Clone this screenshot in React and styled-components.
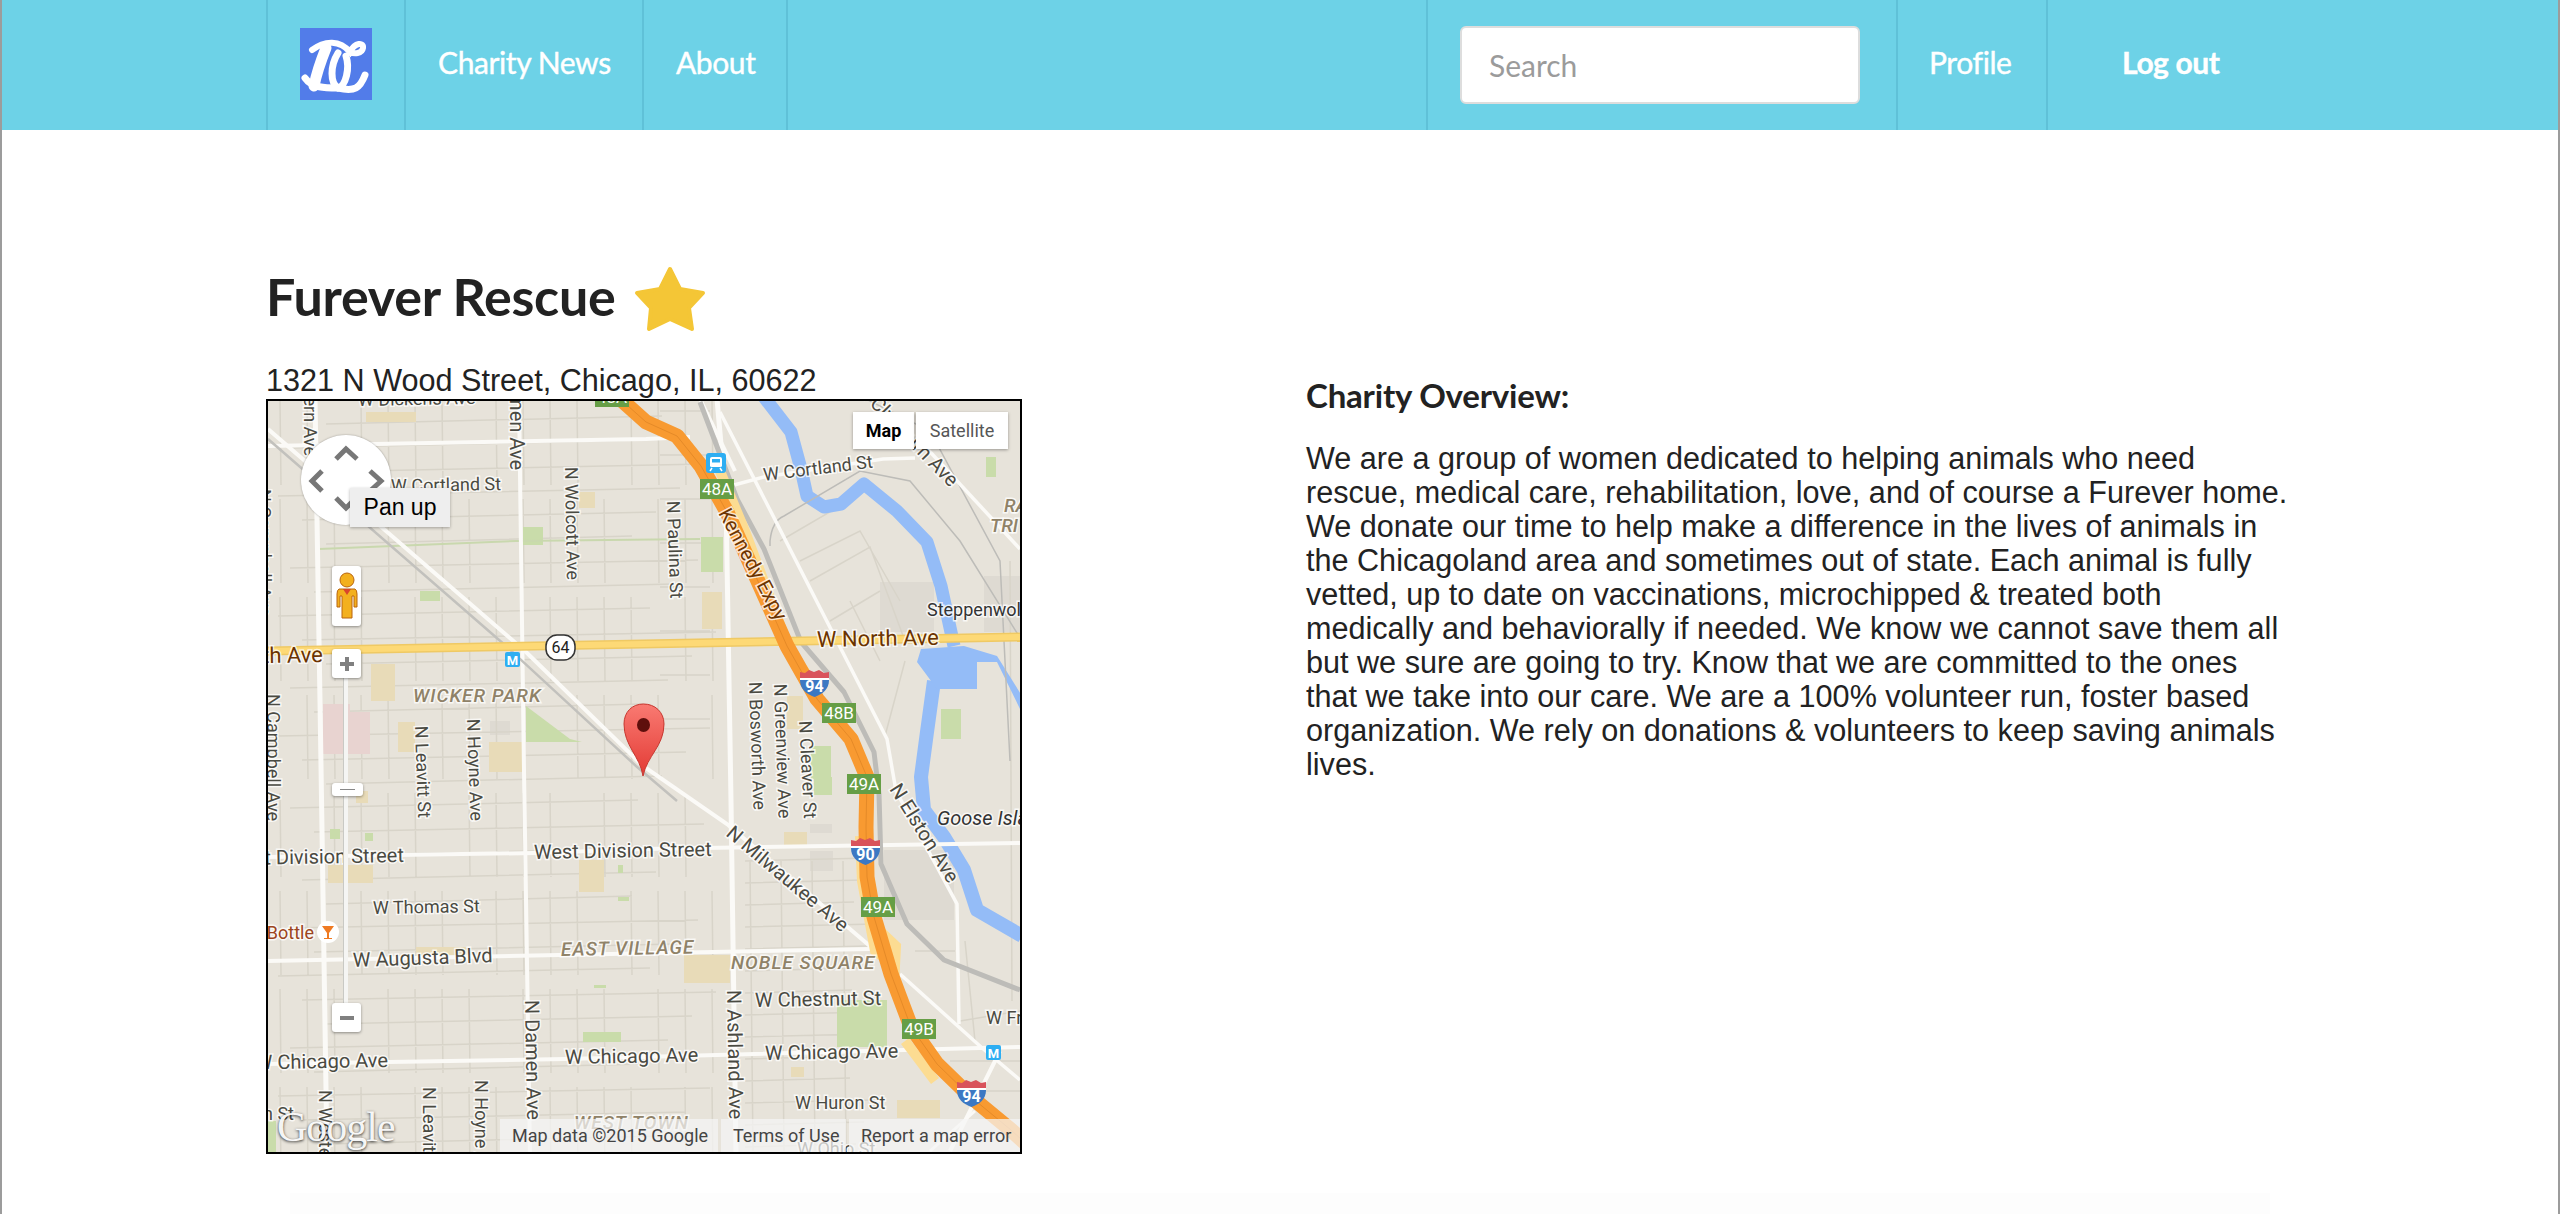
import React from 'react';
import styled, { createGlobalStyle } from 'styled-components';

const GlobalStyle = createGlobalStyle`
  html, body { margin: 0; padding: 0; background: #fff; }
  * { box-sizing: border-box; }
`;

// page shell, with the thin grey window edge of the screenshot
const Page = styled.div`
  position: relative;
  min-height: 1214px;
  height: 1214px;
  overflow: hidden;
  display: flex;
  flex-direction: column;
  border-left: 2px solid #9c9c9c;
  border-right: 2px solid #9c9c9c;
  color: #222;
  font-family: "Liberation Sans", Arial, sans-serif;

  &::before {
    content: '';
    position: absolute;
    left: -2px;
    top: 313px;
    width: 2px;
    height: 40px;
    background: #666;
  }
`;

// top bar
const NavBar = styled.nav`
  flex: none;
  height: 130px;
  background: #6dd2e7;
  display: flex;
  padding-left: 264px;
  font-family: Lato, sans-serif;
`;

const NavCell = styled.div`
  height: 100%;
  width: ${p => p.$w}px;
  border-left: 2px solid #5fc1d8;
  display: flex;
  align-items: center;
  justify-content: ${p => p.$center ? 'center' : 'flex-start'};
  padding-left: ${p => p.$pad || 0}px;
`;

const NavLink = styled.a`
  color: #fff;
  font-size: 30px;
  font-weight: ${p => p.$bold ? 700 : 400};
  letter-spacing: -0.4px;
  margin-top: -6px;
  -webkit-text-stroke: 0.4px #fff;
`;

const LogoSvg = styled.svg`
  display: block;
  width: 72px;
  height: 72px;
  margin-top: -2px;
`;

const SearchInput = styled.input`
  width: 400px;
  height: 78px;
  padding: 0 27px;
  border: 2px solid #ddd;
  border-radius: 6px;
  background: #fff;
  font-family: Lato, sans-serif;
  font-size: 30px;
  outline: none;
  &::placeholder { color: #9b9b9b; opacity: 1; }
`;

// content
const Main = styled.main`
  flex: none;
  height: 1063px;
  display: flex;
  padding: 130px 0 0 264px;
`;

const LeftColumn = styled.section`
  width: 1040px;
`;

const TitleRow = styled.div`
  display: flex;
  align-items: center;
  gap: 18px;
  height: 72px;
  margin-top: 3px;
`;

const Title = styled.h1`
  margin: -6px 0 0;
  font-family: Lato, sans-serif;
  font-size: 52px;
  font-weight: 700;
  letter-spacing: -0.2px;
  color: #222;
  line-height: 1;
`;

const StarIcon = styled.svg`
  display: block;
  width: 72px;
  height: 66px;
`;

const Address = styled.div`
  margin-top: 28px;
  font-size: 30.6px;
  line-height: 34px;
  height: 36px;
  white-space: nowrap;
  color: #222;
`;

const MapFrame = styled.div`
  position: relative;
  width: 756px;
  height: 755px;
  border: 2px solid #000;
  overflow: hidden;
  background: #e7e3da;
`;

const MapSvg = styled.svg`
  display: block;
  width: 752px;
  height: 751px;
`;

const MapLabel = styled.text`
  font-family: Roboto, sans-serif;
  font-size: ${p => p.$size || 18}px;
  font-style: ${p => p.$italic ? 'italic' : 'normal'};
  font-weight: ${p => p.$weight || 400};
  letter-spacing: ${p => p.$track || 0}px;
  fill: ${p => p.$fill || '#4a4a42'};
  stroke: rgba(255, 255, 255, 0.75);
  stroke-width: 3px;
  paint-order: stroke;
`;

const ShieldText = styled.text`
  font-family: Roboto, sans-serif;
  font-size: ${p => p.$size || 17}px;
  font-weight: ${p => p.$weight || 400};
  fill: ${p => p.$fill || '#fff'};
  text-anchor: middle;
`;

const PanControl = styled.div`
  position: absolute;
  left: 33px;
  top: 34px;
  width: 90px;
  height: 90px;
  border-radius: 50%;
  background: #fff;
  box-shadow: 0 0 2px rgba(0, 0, 0, 0.35);
`;

const Tooltip = styled.div`
  position: absolute;
  left: 82px;
  top: 87px;
  width: 100px;
  height: 39px;
  background: #eee;
  box-shadow: 0 1px 3px rgba(0, 0, 0, 0.3);
  font-size: 23px;
  line-height: 39px;
  text-align: center;
  color: #000;
`;

const ControlBox = styled.div`
  position: absolute;
  left: 64px;
  top: ${p => p.$top}px;
  width: 29px;
  height: ${p => p.$h || 29}px;
  background: #fff;
  border-radius: 3px;
  box-shadow: 0 1px 3px rgba(0, 0, 0, 0.4);
  display: flex;
  align-items: center;
  justify-content: center;
`;

const SliderTrack = styled.div`
  position: absolute;
  left: 75px;
  top: 277px;
  width: 5px;
  height: 325px;
  background: #f5f5f3;
  border-left: 1px solid #c9c9c4;
`;

const SliderThumb = styled.div`
  position: absolute;
  left: 64px;
  top: 382px;
  width: 31px;
  height: 13px;
  background: #fff;
  border-radius: 3px;
  box-shadow: 0 1px 3px rgba(0, 0, 0, 0.4);
  display: flex;
  align-items: center;
  justify-content: center;

  &::after {
    content: '';
    width: 15px;
    height: 1px;
    background: #888;
  }
`;

const MapTypeBar = styled.div`
  position: absolute;
  right: 12px;
  top: 11px;
  display: flex;
  gap: 2px;
  font-family: Roboto, sans-serif;
  font-size: 18px;
`;

const MapTypeButton = styled.div`
  height: 37px;
  width: ${p => p.$w}px;
  background: #fff;
  box-shadow: 0 1px 3px rgba(0, 0, 0, 0.35);
  line-height: 37px;
  text-align: center;
  font-weight: ${p => p.$active ? 700 : 400};
  color: ${p => p.$active ? '#000' : '#565656'};
`;

const GoogleMark = styled.div`
  position: absolute;
  left: 9px;
  bottom: 2px;
  font-family: "Liberation Serif", serif;
  font-size: 42px;
  line-height: 46px;
  letter-spacing: -1px;
  color: rgba(255, 255, 255, 0.95);
  text-shadow: 0 1px 3px rgba(0, 0, 0, 0.8);
`;

const Attribution = styled.div`
  position: absolute;
  right: 0;
  bottom: 0;
  height: 33px;
  display: flex;
  gap: 3px;
  font-family: Roboto, sans-serif;
  font-size: 18px;
  line-height: 33px;
  color: #444;
`;

const AttributionItem = styled.div`
  width: ${p => p.$w}px;
  padding-left: 12px;
  background: rgba(245, 245, 245, 0.72);
  white-space: nowrap;
`;

const RightColumn = styled.section`
  width: 985px;
  padding-top: 118px;
`;

const OverviewTitle = styled.h3`
  margin: 0 0 29px;
  font-family: Lato, sans-serif;
  font-size: 33px;
  font-weight: 700;
  line-height: 34px;
  letter-spacing: -0.2px;
  color: #222;
`;

const OverviewText = styled.p`
  margin: 0;
  font-size: 30.6px;
  line-height: 34px;
  color: #222;
`;

const FooterHint = styled.div`
  flex: none;
  height: 21px;
  margin: 0 288px;
  background: #fdfdfd;
`;

// street data, in page coordinates (the svg viewBox starts at 268,400)
const whiteRoads = [
  ['M268 445 L646 438 L690 436', 4],
  ['M734 484 L764 476 L883 458 L915 457', 3.5],
  ['M315 398 L320 700 L327 1153', 5],
  ['M519 398 L524 770 L530 1153', 4],
  ['M717 398 L726 500 L731 800 L736 1153', 5],
  ['M268 428 L526 651 L643 765 L727 823 L871 946', 4],
  ['M268 856 L534 852 L644 848 L1020 842', 4],
  ['M268 960 L559 954 L871 948', 4],
  ['M268 1063 L566 1058 L1020 1046', 4],
  ['M720 411 L887 738 L896 790 L957 903 L959 1023', 3.5],
  ['M900 973 L981 1046 L1020 1079', 3.5],
  ['M921 441 L1020 548', 3.5],
  ['M1000 1050 L950 1150', 4],
  ['M975 1110 L930 1150', 3],
  ['M700 398 L735 470', 4],
];

const highway = 'M618 396 L646 421 L677 435 L701 465 L727 511 L757 578 L787 645 L817 698 L851 738 L867 776 L866 826 L867 876 L874 916 L891 973 L911 1026 L937 1063 L971 1096 L1011 1129 L1045 1160';
const railway = 'M700 401 L737 498 L764 548 L801 641 L844 691 L874 751 L879 793 L881 863 L907 923 L944 959 L1020 989';
const river = 'M764 396 L791 431 L801 468 L807 495 L824 506 L841 503 L864 483 L897 510 L927 541 L941 585 L954 645';
const riverSouth = 'M934 680 L927 731 L921 776 L924 809 L944 836 L964 869 L977 909 L1022 935';
const riverPool = 'M917 661 L921 648 L964 645 L997 655 L1022 695 L1022 712 L997 661 L977 661 L977 688 L937 688 Z';

const parks = [
  [837, 999, 50, 47], [583, 1031, 38, 10], [523, 526, 20, 18], [701, 536, 22, 35], [941, 708, 20, 30],
  [986, 456, 10, 20], [811, 745, 20, 33], [814, 776, 18, 18], [420, 590, 20, 10], [330, 828, 10, 10], [365, 832, 8, 8],
  [594, 984, 12, 3], [618, 864, 5, 8], [618, 896, 11, 4], [266, 1120, 10, 33],
];
const tanLots = [
  [366, 411, 50, 10], [371, 663, 24, 37], [398, 721, 17, 30], [489, 741, 33, 30], [579, 491, 16, 16], [702, 591, 20, 37],
  [787, 695, 16, 33], [328, 864, 45, 18], [579, 859, 25, 32], [416, 946, 50, 8], [684, 954, 46, 28], [784, 831, 23, 13],
  [791, 1066, 13, 10], [897, 1099, 43, 18], [356, 790, 12, 12],
];
const pinkLots = [[323, 703, 27, 50], [349, 711, 21, 42]];
const grayLots = [[880, 581, 54, 50], [984, 575, 38, 56], [884, 849, 70, 70], [810, 823, 22, 9], [810, 850, 23, 20], [490, 720, 20, 14]];

// the minor street grid is regular enough to generate
const gridLines = [];
for (let y = 418; y < 1150; y += 24) {
  const tilt = y % 3 === 0 ? 1 : 0;
  gridLines.push(`M${268 + (y % 60)} ${y + 5} L${720 - (y % 90)} ${y + 5 - 8 - tilt}`);
}
for (let x = 280; x < 720; x += 27) {
  for (let y = 400; y < 1150; y += 98) {
    if ((x + y) % 5 === 4) continue;
    gridLines.push(`M${x} ${y} L${x + 1} ${y + 84}`);
  }
}
for (let y = 860; y < 1150; y += 22) gridLines.push(`M745 ${y} L${850 + (y % 30)} ${y - 3}`);
for (let x = 750; x < 850; x += 31) gridLines.push(`M${x} 860 L${x + 3} 1150`);
for (let y = 410; y < 720; y += 44) gridLines.push(`M660 ${y} L710 ${y}`);
const industrial = [
  'M800 560 L860 530 L900 600', 'M810 580 L870 546 L905 640', 'M780 540 L840 505', 'M850 600 L880 660',
  'M830 620 L880 590', 'M905 660 L885 735', 'M1010 560 L1012 1000', 'M960 1020 L1020 1010', 'M950 1060 L1020 1060', 'M960 1090 L1020 1090',
  'M965 940 L975 1040', 'M915 950 L955 950',
];
const thinRail = 'M866 398 L930 430 L1000 560 L1010 760 M770 545 L770 540 Q772 520 784 515 L860 470 L910 480 L960 540 L1022 640';

const roadLabels = [
  { t: 'W Dickens Ave', x: 358, y: 405, r: -1 },
  { t: 'W Cortland St', x: 391, y: 491, r: -1 },
  { t: 'W Cortland St', x: 764, y: 480, r: -7 },
  { t: 'N Western Ave', x: 304, y: 455, r: 90, end: true },
  { t: 'N Damen Ave', x: 510, y: 469, r: 90, end: true, size: 20 },
  { t: 'N Wolcott Ave', x: 565, y: 466, r: 89 },
  { t: 'N Paulina St', x: 667, y: 500, r: 88 },
  { t: 'Kennedy Expy', x: 718, y: 512, r: 62, fill: '#6d3400', size: 20 },
  { t: 'W North Ave', x: 817, y: 646, r: -1, fill: '#6b3300', size: 22 },
  { t: 'W North Ave', x: 323, y: 661, r: -1, fill: '#6b3300', size: 22, end: true },
  { t: 'N Campbell Ave', x: 258, y: 488, r: 90 },
  { t: 'N Campbell Ave', x: 267, y: 693, r: 90 },
  { t: 'N Leavitt St', x: 415, y: 725, r: 88 },
  { t: 'N Hoyne Ave', x: 467, y: 718, r: 88 },
  { t: 'N Bosworth Ave', x: 749, y: 681, r: 88 },
  { t: 'N Greenview Ave', x: 774, y: 683, r: 88 },
  { t: 'N Cleaver St', x: 799, y: 720, r: 87 },
  { t: 'N Milwaukee Ave', x: 725, y: 834, r: 40, size: 20 },
  { t: 'N Elston Ave', x: 889, y: 788, r: 58, size: 20 },
  { t: 'West Division Street', x: 534, y: 858, r: -1, size: 20 },
  { t: 'West Division Street', x: 404, y: 861, r: -1, end: true, size: 20 },
  { t: 'W Thomas St', x: 373, y: 913, r: -1 },
  { t: 'W Augusta Blvd', x: 353, y: 966, r: -2, size: 20 },
  { t: 'W Chestnut St', x: 755, y: 1006, r: -1, size: 20 },
  { t: 'W Franklin', x: 986, y: 1023, r: 0 },
  { t: 'W Chicago Ave', x: 388, y: 1066, r: -1, end: true, size: 20 },
  { t: 'W Chicago Ave', x: 565, y: 1063, r: -1, size: 20 },
  { t: 'W Chicago Ave', x: 765, y: 1059, r: -1, size: 20 },
  { t: 'N Damen Ave', x: 525, y: 999, r: 89, size: 20 },
  { t: 'N Ashland Ave', x: 727, y: 989, r: 89, size: 20 },
  { t: 'N Leavitt St', x: 423, y: 1086, r: 90 },
  { t: 'N Hoyne Ave', x: 475, y: 1079, r: 90 },
  { t: 'N Western Ave', x: 319, y: 1089, r: 90 },
  { t: 'W Huron St', x: 795, y: 1108, r: 0 },
  { t: 'W Huron St', x: 294, y: 1119, r: 0, end: true },
  { t: 'W Ohio St', x: 797, y: 1154, r: 0 },
  { t: 'N Clybourn Ave', x: 950, y: 487, r: 46, end: true, size: 20 },
  { t: 'Steppenwolf', x: 927, y: 615, r: 0, fill: '#333' },
  { t: 'Goose Island', x: 937, y: 824, r: 0, fill: '#333', size: 20, italic: true },
  { t: 'Bottle', x: 314, y: 938, r: 0, fill: '#9c4420', end: true },
];

const areaLabels = [
  { t: 'WICKER PARK', x: 413, y: 701, r: 0, track: 1 },
  { t: 'EAST VILLAGE', x: 561, y: 955, r: -1, track: 1 },
  { t: 'NOBLE SQUARE', x: 731, y: 968, r: 0, track: 1 },
  { t: 'WEST TOWN', x: 574, y: 1128, r: 0, track: 1 },
  { t: 'RA', x: 1004, y: 511, r: 0 },
  { t: 'TRI', x: 990, y: 531, r: 0 },
];

const exitSigns = [
  ['48A', 700, 478], ['48B', 822, 702], ['49A', 847, 773], ['49A', 861, 896], ['49B', 902, 1018], ['48A', 595, 386],
];

const interstates = [['94', 800, 668], ['90', 851, 836], ['94', 957, 1078]];

function MapRoadLabel({ t, x, y, r, end, ...style }) {
  return (
    <MapLabel
      transform={`translate(${x} ${y}) rotate(${r})`}
      textAnchor={end ? 'end' : 'start'}
      $fill={style.fill}
      $size={style.size}
      $italic={style.italic}
    >
      {t}
    </MapLabel>
  );
}

function Interstate({ n, x, y }) {
  return (
    <g transform={`translate(${x} ${y})`}>
      <path d="M0 11 L0 3 L5 4 L9 1 L14 3 L19 1 L24 4 L29 3 L29 11 Z" fill="#d9535b" />
      <path d="M0 9 L29 9 L29 11 L0 11 Z" fill="#fff" />
      <path d="M0 11 L29 11 C29 20 23 25 14.500 28 C6 25 0 20 0 11 Z" fill="#3c78c3" />
      <ShieldText x="14.500" y="23" $size={16} $weight={700}>{n}</ShieldText>
    </g>
  );
}

function MetroIcon({ x, y }) {
  return (
    <g transform={`translate(${x} ${y})`}>
      <rect width="15" height="15" rx="2" fill="#2eaef2" />
      <ShieldText x="7.500" y="12.500" $size={13} $weight={700}>M</ShieldText>
    </g>
  );
}

function StreetMap() {
  return (
    <MapSvg viewBox="268 400 752 751">
      <rect x="268" y="400" width="752" height="751" fill="#e7e3da" />
      {grayLots.map(([x, y, w, h]) => <rect key={`g${x}${y}`} x={x} y={y} width={w} height={h} fill="#dedad2" />)}
      <path d={gridLines.join(' ')} stroke="#d8d4c9" strokeWidth="1.5" fill="none" />
      <path d={industrial.join(' ')} stroke="#d8d4c9" strokeWidth="1.5" fill="none" />
      {parks.map(([x, y, w, h]) => <rect key={`p${x}${y}`} x={x} y={y} width={w} height={h} fill="#c9dcaa" />)}
      <path d="M526 705 L570 738 L582 741 L526 741 Z" fill="#c9dcaa" />
      <path d="M319 548 L516 540 L700 538" stroke="#c9d8ae" strokeWidth="2" fill="none" />
      {tanLots.map(([x, y, w, h]) => <rect key={`t${x}${y}`} x={x} y={y} width={w} height={h} fill="#e8dbb8" />)}
      {pinkLots.map(([x, y, w, h]) => <rect key={`k${x}${y}`} x={x} y={y} width={w} height={h} fill="#e8d3d0" />)}

      <path d={river} stroke="#94bcf7" strokeWidth="13" fill="none" strokeLinejoin="round" />
      <path d={riverSouth} stroke="#94bcf7" strokeWidth="14" fill="none" strokeLinejoin="round" />
      <path d={riverPool} fill="#94bcf7" />
      <path d={thinRail} stroke="#bdbcb8" strokeWidth="1.5" fill="none" />

      {whiteRoads.map(([d, w]) => <path key={d} d={d} stroke="#fbfaf7" strokeWidth={w} fill="none" />)}
      <path d="M268 438 L506 645 L636 765 L677 800" stroke="#c2c1bd" strokeWidth="2.5" fill="none" />
      <path d={railway} stroke="#bdbcb8" strokeWidth="5" fill="none" strokeLinejoin="round" />
      <path d="M268 650 L1020 636" stroke="#efc964" strokeWidth="9" fill="none" />
      <path d="M268 650 L1020 636" stroke="#fdd976" strokeWidth="6" fill="none" />
      <path d="M720 470 L745 530 L790 650 L815 685 M860 835 L862 880 L875 950 L895 965 L896 945 L880 930 M905 1040 L935 1080" stroke="#fcdc92" strokeWidth="10" fill="none" />
      <path d={highway} stroke="#f89a31" strokeWidth="15" fill="none" strokeLinejoin="round" />
      <path d={highway} stroke="#e58a28" strokeWidth="1" fill="none" />

      {areaLabels.map(l => (
        <MapLabel key={l.t} transform={`translate(${l.x} ${l.y}) rotate(${l.r})`} $italic $weight={500} $size={19} $track={l.track} $fill="#8f8268">
          {l.t}
        </MapLabel>
      ))}
      {roadLabels.map(l => <MapRoadLabel key={`${l.t}${l.x}`} {...l} />)}

      {exitSigns.map(([label, x, y]) => (
        <g key={`${label}${y}`} transform={`translate(${x} ${y})`}>
          <rect width="34" height="20" fill="#669e46" />
          <ShieldText x="17" y="16">{label}</ShieldText>
        </g>
      ))}
      {interstates.map(([n, x, y]) => <Interstate key={`${n}${y}`} n={n} x={x} y={y} />)}

      <rect x="546" y="634" width="29" height="25" rx="11" fill="#fff" stroke="#333" strokeWidth="1.500" />
      <ShieldText x="560.500" y="652" $size={16} $fill="#222">64</ShieldText>
      <MetroIcon x={505} y={651} />
      <MetroIcon x={986} y={1044} />

      <g transform="translate(706 452)">
        <rect width="20" height="20" rx="3" fill="#2eaef2" />
        <path d="M6 4 H14 Q16 4 16 6 V13 Q16 14 14 14 H6 Q4 14 4 13 V6 Q4 4 6 4 Z" fill="#fff" />
        <rect x="6" y="6" width="8" height="3.500" fill="#2eaef2" />
        <path d="M6 15 L4 18 M14 15 L16 18" stroke="#fff" strokeWidth="1.500" />
      </g>

      <circle cx="328" cy="931" r="11" fill="#fff" />
      <path d="M322 925 H334 L329 932 V937 H332 V938 H324 V937 H327 V932 Z" fill="#ef7a22" />

      {/* marker */}
      <defs>
        <linearGradient id="pinFill" x1="0" y1="0" x2="0" y2="1">
          <stop offset="0" stopColor="#f97a72" />
          <stop offset="1" stopColor="#e33b35" />
        </linearGradient>
      </defs>
      <path d="M643 775 C640 755 624 745 624 723 C624 711 632 703 643.500 703 C655 703 664 711 664 723 C664 745 647 755 643 775 Z" fill="url(#pinFill)" stroke="#c7372f" strokeWidth="1" />
      <ellipse cx="643.500" cy="724" rx="6.500" ry="7" fill="#5e0f0c" />
    </MapSvg>
  );
}

function PanArrows() {
  return (
    <svg width="90" height="90" viewBox="0 0 90 90" fill="none" stroke="#777" strokeWidth="5">
      <path d="M35 24 L45 14 L56 24" />
      <path d="M21 36 L11 46 L21 56" />
      <path d="M69 36 L80 46 L69 56" />
      <path d="M35 63 L45 73 L55 63" />
    </svg>
  );
}

function Pegman() {
  return (
    <svg width="22" height="48" viewBox="0 0 22 48" stroke="#b9650e" strokeWidth="1">
      <circle cx="11" cy="8" r="7" fill="#f3b01e" />
      <path d="M3 17 L19 17 Q21 18 21 22 V35 H18 V24 L16 24 V46 H6 V24 L4 24 V35 H1 V22 Q1 18 3 17 Z" fill="#f3b01e" />
      <path d="M7 17 H15 L11 23 Z" fill="#d9462c" stroke="none" />
    </svg>
  );
}

function ZoomGlyph({ plus }) {
  return (
    <svg width="16" height="16" viewBox="0 0 16 16" fill="#808080">
      <rect x="1" y="6" width="14" height="4" />
      {plus && <rect x="6" y="1" width="4" height="14" />}
    </svg>
  );
}

function MapPanel() {
  return (
    <MapFrame>
      <StreetMap />
      <PanControl><PanArrows /></PanControl>
      <Tooltip>Pan up</Tooltip>
      <ControlBox $top={165} $h={60}><Pegman /></ControlBox>
      <SliderTrack />
      <ControlBox $top={248}><ZoomGlyph plus /></ControlBox>
      <SliderThumb />
      <ControlBox $top={602}><ZoomGlyph /></ControlBox>
      <MapTypeBar>
        <MapTypeButton $w={61} $active>Map</MapTypeButton>
        <MapTypeButton $w={92}>Satellite</MapTypeButton>
      </MapTypeBar>
      <GoogleMark>Google</GoogleMark>
      <Attribution>
        <AttributionItem $w={218}>Map data ©2015 Google</AttributionItem>
        <AttributionItem $w={125}>Terms of Use</AttributionItem>
        <AttributionItem $w={171}>Report a map error</AttributionItem>
      </Attribution>
    </MapFrame>
  );
}

function Logo() {
  return (
    <LogoSvg viewBox="0 0 72 72">
      <rect width="72" height="72" fill="#527ce9" />
      <g fill="none" stroke="#fff" strokeWidth="7" strokeLinecap="round">
        <path d="M12 22 C25 12 40 12 50 24 C55 14 64 14 63 20 C62 26 54 26 50 24" strokeWidth="6" />
        <path d="M26 20 C20 35 16 48 14 58" strokeWidth="11" />
        <path d="M38 25 C30 38 30 55 38 60 C46 58 50 40 46 28" strokeWidth="7" />
        <path d="M5 50 C12 60 25 60 38 60 C55 64 60 60 65 47" />
      </g>
    </LogoSvg>
  );
}

export default function App() {
  return (
    <Page>
      <GlobalStyle />
      <NavBar>
        <NavCell $w={138} $center><Logo /></NavCell>
        <NavCell $w={238} $pad={32}><NavLink>Charity News</NavLink></NavCell>
        <NavCell $w={144} $pad={32}><NavLink>About</NavLink></NavCell>
        <NavCell $w={640} />
        <NavCell $w={470} $pad={32}><SearchInput placeholder="Search" /></NavCell>
        <NavCell $w={150} $pad={31}><NavLink>Profile</NavLink></NavCell>
        <NavCell $w={300} $pad={74}><NavLink $bold>Log out</NavLink></NavCell>
      </NavBar>
      <Main>
        <LeftColumn>
          <TitleRow>
            <Title>Furever Rescue</Title>
            <StarIcon viewBox="0 0 72 66">
              <path
                d="M36 3 L46 23 L69 27 L55 42 L58 63 L36 53 L15 63 L17 42 L3 27 L26 23 Z"
                fill="#f4c636"
                stroke="#f4c636"
                strokeWidth="4"
                strokeLinejoin="round"
              />
            </StarIcon>
          </TitleRow>
          <Address>1321 N Wood Street, Chicago, IL, 60622</Address>
          <MapPanel />
        </LeftColumn>
        <RightColumn>
          <OverviewTitle>Charity Overview:</OverviewTitle>
          <OverviewText>
            We are a group of women dedicated to helping animals who need rescue, medical care, rehabilitation, love, and of course a Furever home. We donate our time to help make a difference in the lives of animals in the Chicagoland area and sometimes out of state. Each animal is fully vetted, up to date on vaccinations, microchipped &amp; treated both medically and behaviorally if needed. We know we cannot save them all but we sure are going to try. Know that we are committed to the ones that we take into our care. We are a 100% volunteer run, foster based organization. We rely on donations &amp; volunteers to keep saving animals lives.
          </OverviewText>
        </RightColumn>
      </Main>
      <FooterHint />
    </Page>
  );
}
